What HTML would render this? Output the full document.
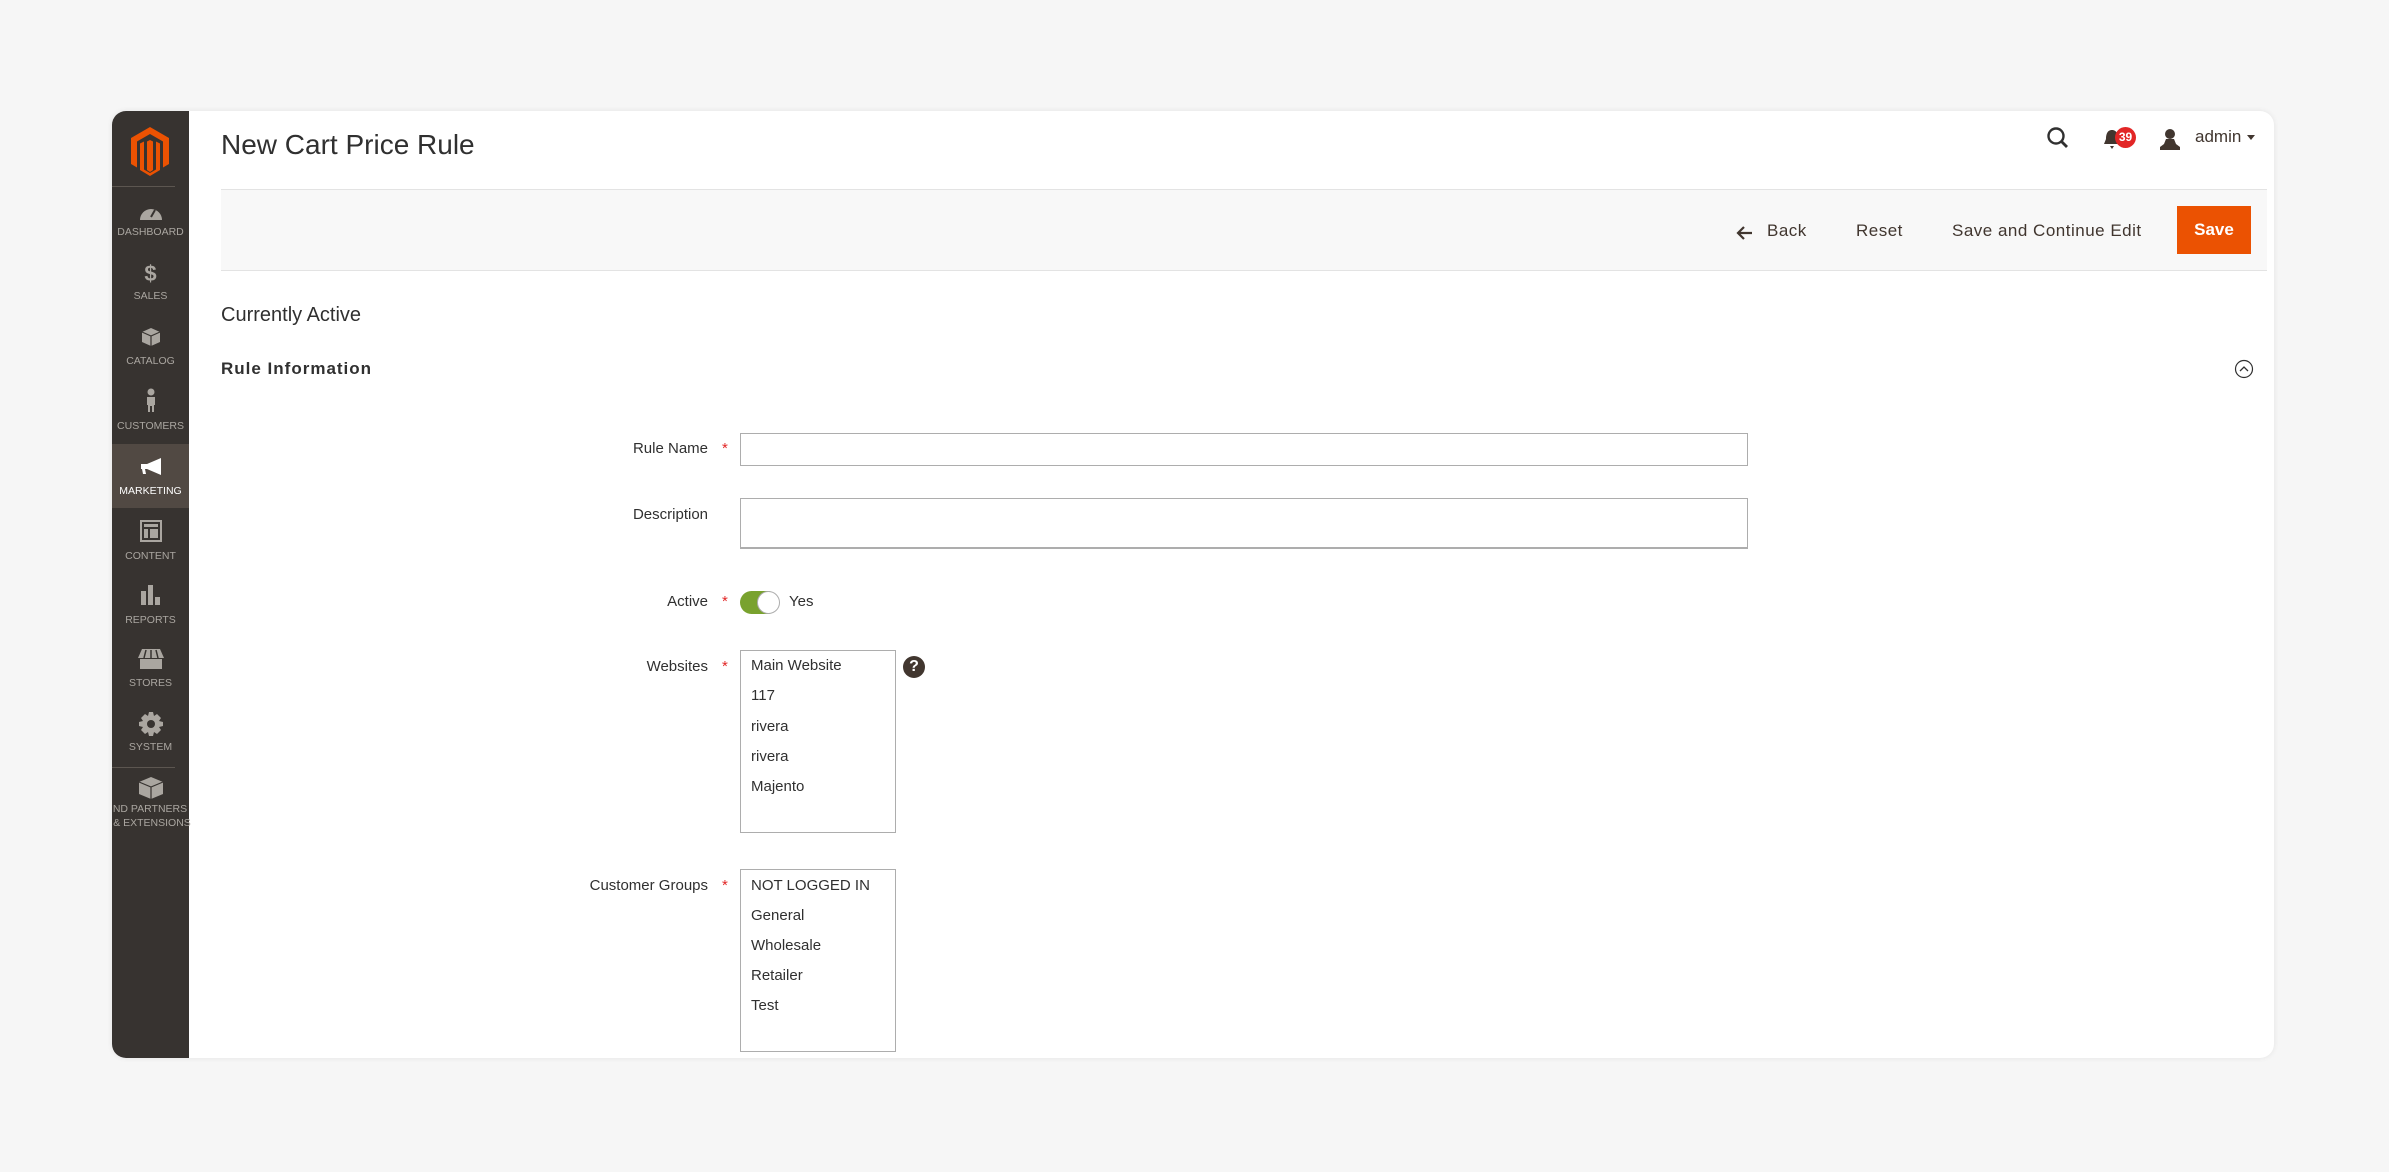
<!DOCTYPE html>
<html><head><meta charset="utf-8"><style>
*{margin:0;padding:0;box-sizing:border-box}
body{width:2389px;height:1172px;background:#f6f6f6;font-family:"Liberation Sans",sans-serif;color:#303030;position:relative;overflow:hidden}
.card{position:absolute;left:112px;top:111px;width:2162px;height:947px;background:#fff;border-radius:14px;box-shadow:0 0 6px rgba(0,0,0,.08);overflow:hidden}
.side{position:absolute;left:0;top:0;width:77px;height:100%;background:#373330}
.a{position:absolute}
.lbl{position:absolute;left:0;width:77px;text-align:center;font-size:10.5px;color:#aaa6a0;white-space:nowrap;line-height:12px}
.ic{position:absolute;left:0;width:77px;height:24px;display:flex;justify-content:center;align-items:flex-start}
.ic svg{display:block}
.fl{position:absolute;font-size:15px;color:#303030;text-align:right;right:1681px;white-space:nowrap}
.st{position:absolute;left:722px;color:#e22626;font-size:15px}
.box{position:absolute;border:1px solid #adadad;background:#fff}
.opt{position:absolute;left:751px;font-size:15px;color:#303030}
.btn{position:absolute;font-size:17px;color:#41362f;letter-spacing:.5px}
</style></head><body>
<div class="card">
<div class="side">
 <svg class="a" style="left:16px;top:14px" width="44" height="52" viewBox="0 0 44 52"><path d="M22 2 L41 13 V39 L35 42.5 V16.5 L22 9 L9 16.5 V42.5 L3 39 V13 Z" fill="#eb5202"/><path d="M19 16.5 L22 15 L25 16.5 V45 L22 47 L19 45 Z" fill="#eb5202"/><path d="M12 18.5 L16 16.5 V44.5 L22 48 L28 44.5 V16.5 L32 18.5 V45 L22 51 L12 45 Z" fill="#eb5202"/></svg>
 <div class="a" style="left:0;top:75px;width:63px;height:1px;background:#5c5650"></div>
 <div class="ic" style="top:92px"><svg width="24" height="18"><path d="M1 17 A11 11 0 0 1 23 17 Z" fill="#aaa6a0"/><path d="M12 14 L16 7" stroke="#373330" stroke-width="2"/></svg></div>
 <div class="lbl" style="top:115px">DASHBOARD</div>
 <div class="ic" style="top:152px;font-size:22px;font-weight:bold;color:#aaa6a0;line-height:22px">$</div>
 <div class="lbl" style="top:179px">SALES</div>
 <div class="ic" style="top:216px"><svg width="20" height="20"><path d="M10 1 L19 5 V15 L10 19 L1 15 V5 Z" fill="#aaa6a0"/><path d="M1 5 L10 9 L19 5 M10 9 V19" stroke="#373330" stroke-width="1.2" fill="none"/></svg></div>
 <div class="lbl" style="top:244px">CATALOG</div>
 <div class="ic" style="top:277px"><svg width="14" height="24"><circle cx="7" cy="4" r="3.5" fill="#aaa6a0"/><path d="M3 9 H11 V17 H10 V24 H8 V18 H6 V24 H4 V17 H3 Z" fill="#aaa6a0"/></svg></div>
 <div class="lbl" style="top:309px">CUSTOMERS</div>
 <div class="a" style="left:0;top:333px;width:77px;height:64px;background:#514943"></div>
 <div class="ic" style="top:347px"><svg width="24" height="18"><path d="M2 6 H8 L22 0 V17 L8 11 H6 L7 16 H4 L3 11 H2 Z" fill="#fff"/></svg></div>
 <div class="lbl" style="top:374px;color:#fff">MARKETING</div>
 <div class="ic" style="top:409px"><svg width="22" height="22"><rect x="1" y="1" width="20" height="20" fill="none" stroke="#aaa6a0" stroke-width="2"/><rect x="4" y="4" width="14" height="3" fill="#aaa6a0"/><rect x="4" y="9" width="4" height="9" fill="#aaa6a0"/><rect x="10" y="9" width="8" height="9" fill="#aaa6a0"/></svg></div>
 <div class="lbl" style="top:439px">CONTENT</div>
 <div class="ic" style="top:474px"><svg width="22" height="20"><rect x="1" y="6" width="5" height="14" fill="#aaa6a0"/><rect x="8" y="0" width="5" height="20" fill="#aaa6a0"/><rect x="15" y="12" width="5" height="8" fill="#aaa6a0"/></svg></div>
 <div class="lbl" style="top:503px">REPORTS</div>
 <div class="ic" style="top:538px"><svg width="26" height="20"><path d="M4 0 H22 L26 9 H0 Z" fill="#aaa6a0"/><path d="M2 10 H24 V20 H2 Z" fill="#aaa6a0"/><path d="M8 1 L6 9 M13 1 V9 M18 1 L20 9" stroke="#373330" stroke-width="1.5"/></svg></div>
 <div class="lbl" style="top:566px">STORES</div>
 <div class="ic" style="top:601px"><svg width="24" height="24" viewBox="0 0 24 24"><path d="M10 0 H14 L15 4 L18 2 L22 6 L20 9 L24 10 V14 L20 15 L22 18 L18 22 L15 20 L14 24 H10 L9 20 L6 22 L2 18 L4 15 L0 14 V10 L4 9 L2 6 L6 2 L9 4 Z" fill="#aaa6a0"/><circle cx="12" cy="12" r="4" fill="#373330"/></svg></div>
 <div class="lbl" style="top:630px">SYSTEM</div>
 <div class="a" style="left:0;top:656px;width:63px;height:1px;background:#5c5650"></div>
 <div class="ic" style="top:665px"><svg width="26" height="24"><path d="M13 1 L25 6 V18 L13 23 L1 18 V6 Z" fill="#aaa6a0"/><path d="M1 6 L13 11 L25 6 M13 11 V23" stroke="#373330" stroke-width="1.2" fill="none"/></svg></div>
 <div class="lbl" style="top:692px;left:-12px;width:100px">ND PARTNERS</div>
 <div class="lbl" style="top:706px;left:-10px;width:100px">&amp; EXTENSIONS</div>
</div>
<div class="a" style="left:109px;top:18px;font-size:28px;color:#303030">New Cart Price Rule</div>
<svg class="a" style="left:1934px;top:15px" width="24" height="24"><circle cx="10" cy="10" r="7.5" fill="none" stroke="#303030" stroke-width="2.4"/><path d="M15.5 15.5 L21 21" stroke="#303030" stroke-width="2.8"/></svg>
<svg class="a" style="left:1991px;top:17px" width="18" height="22"><path d="M9 2 C4 2 3 7 3 11 L1 16 H17 L15 11 C15 7 14 2 9 2 Z M7 18 H11 L9 21 Z" fill="#41362f"/></svg>
<div class="a" style="left:2003px;top:16px;width:21px;height:21px;border-radius:50%;background:#e22626;color:#fff;font-size:12px;font-weight:bold;text-align:center;line-height:21px">39</div>
<svg class="a" style="left:2048px;top:17px" width="20" height="22"><circle cx="10" cy="6" r="5" fill="#41362f"/><path d="M6 11 H14 L16 16 L20 19 V22 H0 V19 L4 16 Z" fill="#41362f"/></svg>
<div class="a" style="left:2083px;top:16px;font-size:17px;color:#41362f">admin</div>
<div class="a" style="left:2135px;top:24px;width:0;height:0;border-left:4px solid transparent;border-right:4px solid transparent;border-top:5px solid #41362f"></div>
<div class="a" style="left:109px;top:78px;width:2046px;height:82px;background:#f8f8f8;border-top:1px solid #e3e3e3;border-bottom:1px solid #e3e3e3"></div>
<svg class="a" style="left:1624px;top:114px" width="18" height="16"><path d="M16 8 H3 M8 2 L2 8 L8 14" stroke="#41362f" stroke-width="2.2" fill="none"/></svg>
<div class="btn" style="left:1655px;top:110px">Back</div>
<div class="btn" style="left:1744px;top:110px">Reset</div>
<div class="btn" style="left:1840px;top:110px">Save and Continue Edit</div>
<div class="a" style="left:2065px;top:95px;width:74px;height:48px;background:#eb5202;color:#fff;font-size:17px;font-weight:bold;text-align:center;line-height:48px">Save</div>
<div class="a" style="left:109px;top:193px;font-size:20px;color:#303030">Currently Active</div>
<div class="a" style="left:109px;top:248px;font-size:17px;font-weight:bold;color:#303030;letter-spacing:1px">Rule Information</div>
<svg class="a" style="left:2122px;top:248px" width="20" height="20"><circle cx="10" cy="10" r="8.5" fill="none" stroke="#303030" stroke-width="1.2"/><path d="M6 12 L10 8 L14 12" stroke="#303030" stroke-width="1.3" fill="none"/></svg>
</div>
<div class="fl" style="top:440px">Rule Name</div><div class="st" style="top:440px">*</div>
<div class="box" style="left:740px;top:433px;width:1008px;height:33px"></div>
<div class="fl" style="top:506px">Description</div>
<div class="box" style="left:740px;top:498px;width:1008px;height:51px;border-bottom-width:2px"></div>
<div class="fl" style="top:593px">Active</div><div class="st" style="top:593px">*</div>
<div class="a" style="left:740px;top:591px;width:39px;height:23px;border-radius:12px;background:#79a22e"></div>
<div class="a" style="left:757px;top:591px;width:23px;height:23px;border-radius:50%;background:#fff;border:1px solid #adadad"></div>
<div class="a" style="left:789px;top:593px;font-size:15px">Yes</div>
<div class="fl" style="top:658px">Websites</div><div class="st" style="top:658px">*</div>
<div class="box" style="left:740px;top:650px;width:156px;height:183px"></div>
<div class="opt" style="top:657px">Main Website</div>
<div class="opt" style="top:687px">117</div>
<div class="opt" style="top:718px">rivera</div>
<div class="opt" style="top:748px">rivera</div>
<div class="opt" style="top:778px">Majento</div>
<div class="a" style="left:903px;top:656px;width:22px;height:22px;border-radius:50%;background:#41362f;color:#fff;font-weight:bold;font-size:16px;text-align:center;line-height:22px">?</div>
<div class="fl" style="top:877px">Customer Groups</div><div class="st" style="top:877px">*</div>
<div class="box" style="left:740px;top:869px;width:156px;height:183px"></div>
<div class="opt" style="top:877px">NOT LOGGED IN</div>
<div class="opt" style="top:907px">General</div>
<div class="opt" style="top:937px">Wholesale</div>
<div class="opt" style="top:967px">Retailer</div>
<div class="opt" style="top:997px">Test</div>
</body></html>
